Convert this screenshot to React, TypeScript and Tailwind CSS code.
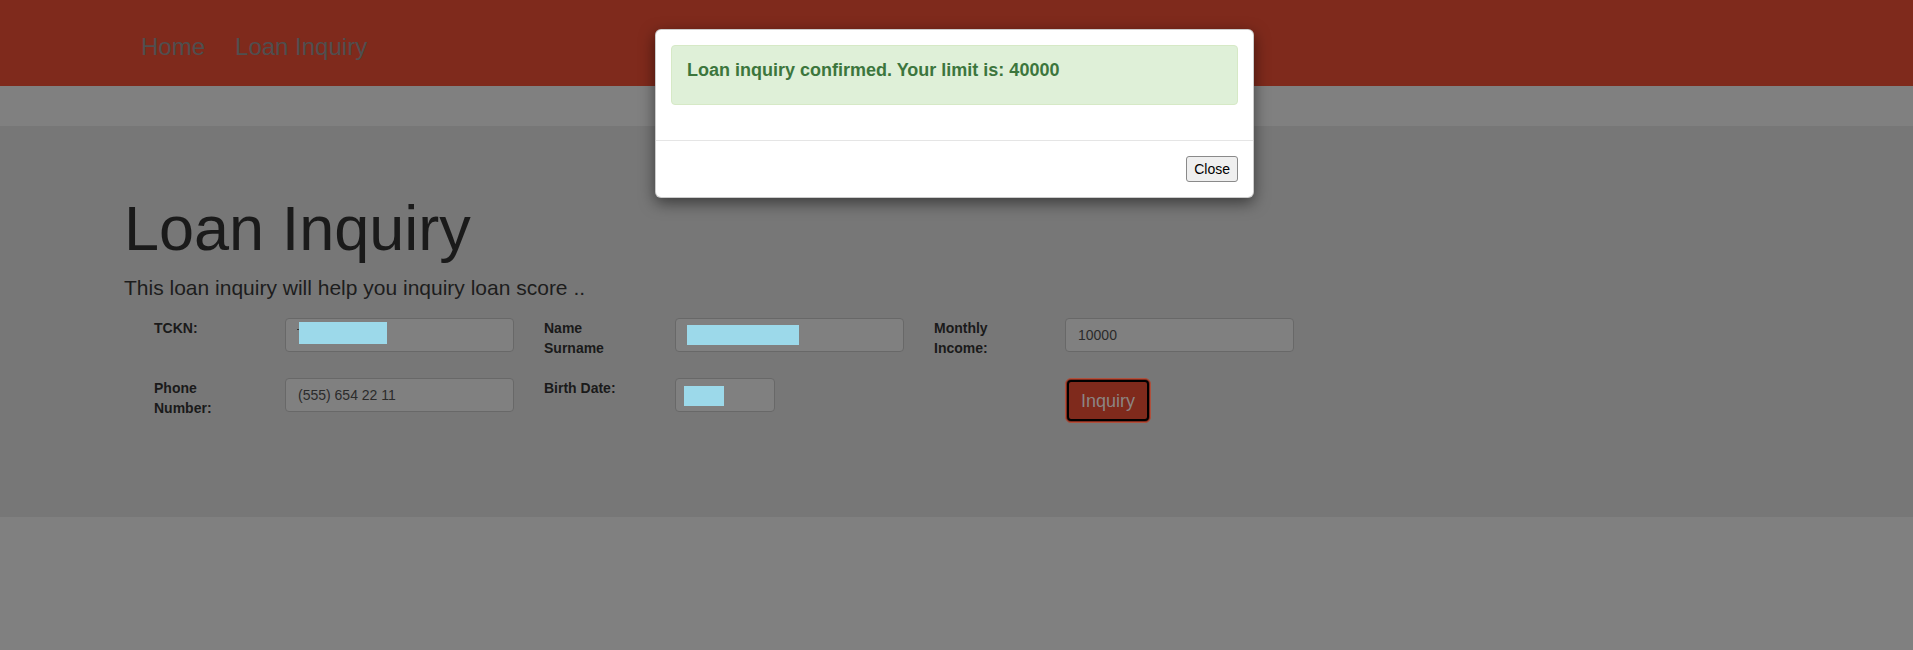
import React from "react";

function Label({ children }: { children: React.ReactNode }) {
  return (
    <div className="w-[131px] shrink-0 pr-[44px] text-[14px] font-bold leading-[20px] text-[#1a1a1a]">
      {children}
    </div>
  );
}

export default function App() {
  return (
    <div className="relative min-h-[650px] w-full bg-[#808080] font-['Liberation_Sans',Arial,sans-serif]">
      <nav className="flex h-[86px] gap-[30px] bg-[#7f2a1c] pl-[141px] pt-[34px] text-[24px] leading-[26px] text-[#4f4f4f]">
        <span>Home</span>
        <span>Loan Inquiry</span>
      </nav>
      <div className="h-[40px] bg-[#808080]" />
      <section className="h-[391px] bg-[#777777] pl-[124px] pt-[48px]">
        <h1 className="mt-[20px] mb-[10px] text-[63px] leading-[69px] text-[#1a1a1a]">Loan Inquiry</h1>
        <p className="mb-[15px] text-[21px] leading-[30px] text-[#1d1d1d]">
          This loan inquiry will help you inquiry loan score ..
        </p>
        <div className="ml-[30px] flex flex-col gap-[20px]">
          <div className="flex h-[40px]">
            <div className="flex w-[390px]">
              <Label>TCKN:</Label>
              <div className="flex h-[34px] w-[229px] items-start rounded-[4px] border border-[#686868] bg-[#808080] pl-[11px] pt-[3px]">
                <span className="mt-[7px] h-[1px] w-[2px] bg-[#333]" />
                <span className="h-[22px] w-[88px] bg-[#9cd9ea]" />
              </div>
            </div>
            <div className="flex w-[390px]">
              <Label>Name Surname</Label>
              <div className="flex h-[34px] w-[229px] items-start rounded-[4px] border border-[#686868] bg-[#808080] pl-[11px] pt-[6px]">
                <span className="h-[20px] w-[112px] bg-[#9cd9ea]" />
              </div>
            </div>
            <div className="flex w-[390px]">
              <Label>Monthly Income:</Label>
              <div className="h-[34px] w-[229px] rounded-[4px] border border-[#686868] bg-[#808080] px-[12px] py-[6px] text-[14px] leading-[20px] text-[#2b2b2b]">
                10000
              </div>
            </div>
          </div>
          <div className="flex h-[45px]">
            <div className="flex w-[390px]">
              <Label>Phone Number:</Label>
              <div className="h-[34px] w-[229px] rounded-[4px] border border-[#686868] bg-[#808080] px-[12px] py-[6px] text-[14px] leading-[20px] text-[#2b2b2b]">
                (555) 654 22 11
              </div>
            </div>
            <div className="flex w-[390px]">
              <Label>Birth Date:</Label>
              <div className="flex h-[34px] w-[100px] items-start rounded-[4px] border border-[#686868] bg-[#808080] pl-[8px] pt-[7px]">
                <span className="h-[20px] w-[40px] bg-[#9cd9ea]" />
              </div>
            </div>
            <div className="flex w-[390px]">
              <div className="w-[131px] shrink-0" />
              <div className="h-[45px] w-[86px] rounded-[6px] border border-[#b0503c] bg-[#7f2a1c] p-[1px]">
                <button className="flex h-full w-full items-center justify-center rounded-[4px] border-2 border-black bg-[#7f2a1c] text-[18px] leading-[24px] text-[#8c8583]">
                  Inquiry
                </button>
              </div>
            </div>
          </div>
        </div>
      </section>

      <div className="absolute left-[655px] top-[29px] w-[599px] rounded-[6px] border border-black/20 bg-white shadow-[0_5px_15px_rgba(0,0,0,0.5)]">
        <div className="p-[15px]">
          <div className="mb-[20px] rounded-[4px] border border-[#d6e9c6] bg-[#dff0d8] p-[15px]">
            <h4 className="mb-[10px] text-[18px] font-bold leading-[18px] text-[#3c763d]">
              Loan inquiry confirmed. Your limit is: 40000
            </h4>
          </div>
        </div>
        <div className="flex justify-end border-t border-[#e5e5e5] p-[15px]">
          <button className="h-[26px] rounded-[3px] border border-[#8a8a8a] bg-[#efefef] px-[7px] text-[14px] leading-[20px] text-black">
            Close
          </button>
        </div>
      </div>
    </div>
  );
}
